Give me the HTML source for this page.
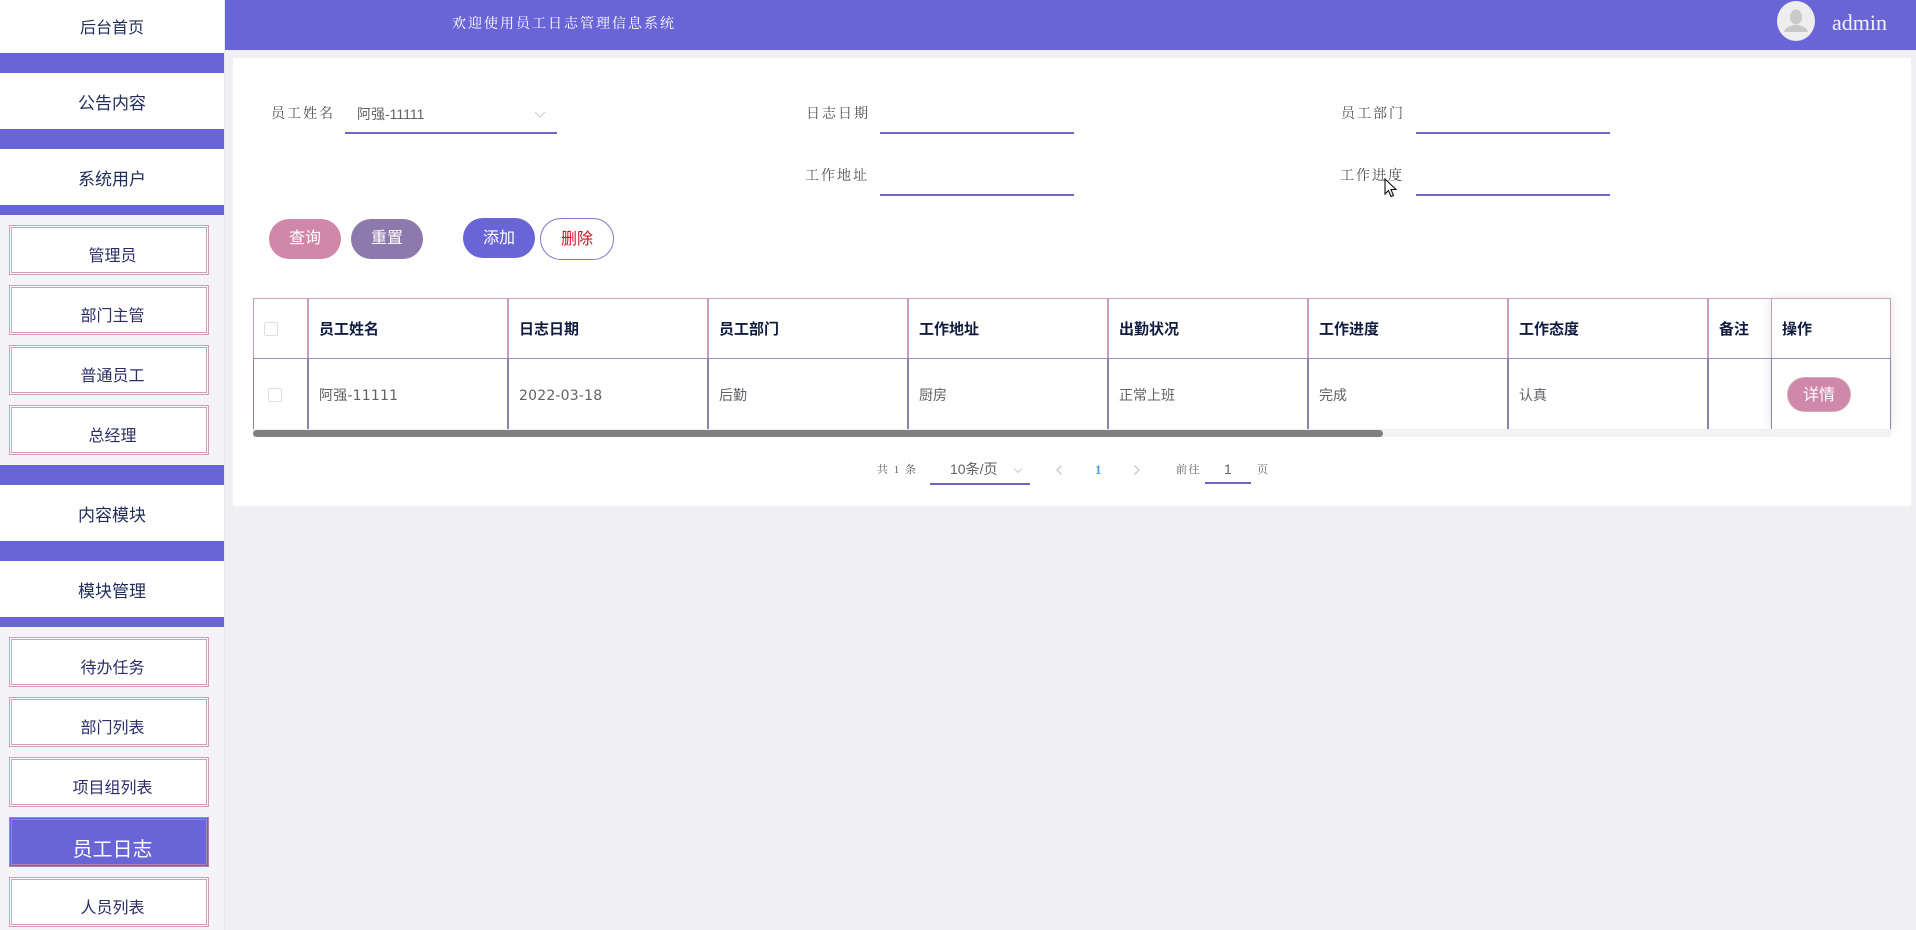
<!DOCTYPE html>
<html lang="zh"><head><meta charset="utf-8"><title>员工日志</title>
<style>
html,body{margin:0;padding:0;width:1916px;height:930px;overflow:hidden;background:#efeff4}
body{position:relative;font-family:"Liberation Sans","Noto Sans CJK SC",sans-serif}
.a{position:absolute}
.t{position:absolute;white-space:nowrap;line-height:20px}
.side{left:0;top:0;width:224px;height:930px;background:#f4f4f7;border-right:1px solid #e8e8ee}
.top{left:0;width:224px;background:#fff;text-align:center;color:#1f2c58;font-size:17px;box-sizing:border-box}
.bar{left:0;width:224px;background:#6a65d6}
.sub{left:9px;width:200px;height:50px;box-sizing:border-box;border:3px double #cf9db6;background:#fff;text-align:center;color:#2b2d66;font-size:16px;line-height:20px;padding-top:19px;padding-left:7px}
.sub.on{background:#6a65d6;color:#fff;font-size:20px;border-color:#b07fb0;padding-top:18px;line-height:24px;padding-left:7px}
.lab{font-family:"Liberation Serif","Noto Serif CJK SC",serif;font-weight:300;font-size:14px;letter-spacing:2px;color:#333}
.ul{height:2px;background:#6d66c4}
.btn{text-align:center;color:#fff;font-size:16px;box-sizing:border-box}
.th{font-size:15px;font-weight:bold;color:#101c40}
.td{font-size:14px;color:#606266;font-family:"DejaVu Sans","Noto Sans CJK SC",sans-serif}
.num{letter-spacing:.2px}
.vh{top:298px;height:60px;width:2px;background:#c99bb4}
.vd{top:358px;height:71px;width:2px;background:#8d82ab}
.cb{width:12px;height:12px;border:1px solid #dcdfe6;border-radius:2px;background:#fff}
.pg{font-family:"Liberation Serif","Noto Serif CJK SC",serif;font-size:11px;letter-spacing:1.5px;color:#606266}
</style></head><body>

<div class="a side"></div>
<div class="a top" style="top:0;height:53px;line-height:58px;font-size:16px">后台首页</div>
<div class="a bar" style="top:53px;height:20px"></div>
<div class="a top" style="top:73px;height:56px;line-height:62px">公告内容</div>
<div class="a bar" style="top:129px;height:20px"></div>
<div class="a top" style="top:149px;height:56px;line-height:62px">系统用户</div>
<div class="a bar" style="top:205px;height:10px"></div>
<div class="a sub" style="top:225px">管理员</div>
<div class="a sub" style="top:285px">部门主管</div>
<div class="a sub" style="top:345px">普通员工</div>
<div class="a sub" style="top:405px">总经理</div>
<div class="a bar" style="top:465px;height:20px"></div>
<div class="a top" style="top:485px;height:56px;line-height:62px">内容模块</div>
<div class="a bar" style="top:541px;height:20px"></div>
<div class="a top" style="top:561px;height:56px;line-height:62px">模块管理</div>
<div class="a bar" style="top:617px;height:10px"></div>
<div class="a sub" style="top:637px">待办任务</div>
<div class="a sub" style="top:697px">部门列表</div>
<div class="a sub" style="top:757px">项目组列表</div>
<div class="a sub on" style="top:817px">员工日志</div>
<div class="a sub" style="top:877px">人员列表</div>

<div class="a" style="left:225px;top:0;width:1691px;height:50px;background:#6a65d6"></div>
<div class="t" style="left:452px;top:15px;font-family:'Liberation Serif','Noto Serif CJK SC',serif;font-size:14px;letter-spacing:2px;color:#fff">欢迎使用员工日志管理信息系统</div>
<div class="a" style="left:1777px;top:1px;width:38px;height:40px;border-radius:50%;background:#eeeeee;overflow:hidden">
<svg width="38" height="40" viewBox="0 0 38 40"><ellipse cx="19" cy="16" rx="6" ry="7.5" fill="#c9c9c9"/><path d="M7 31c1-5 7-6 9-7h6c2 1 8 2 9 7z" fill="#c9c9c9"/></svg></div>
<div class="t" style="left:1832px;top:13px;font-family:'Liberation Serif',serif;font-size:22px;color:#f1f0fb">admin</div>

<div class="a" style="left:233px;top:58px;width:1678px;height:448px;background:#fff"></div>

<div class="t lab" style="left:271px;top:105px">员工姓名</div>
<div class="t" style="left:357px;top:104px;font-size:14px;color:#606266">阿强-11111</div>
<svg class="a" style="left:534px;top:110px" width="12" height="9" viewBox="0 0 12 9"><path d="M1 2l5 5 5-5" fill="none" stroke="#c9ccd3" stroke-width="1"/></svg>
<div class="a ul" style="left:345px;top:131.5px;width:212px"></div>
<div class="t lab" style="left:806px;top:105px">日志日期</div>
<div class="a ul" style="left:880px;top:131.5px;width:194px"></div>
<div class="t lab" style="left:1341px;top:105px">员工部门</div>
<div class="a ul" style="left:1416px;top:131.5px;width:194px"></div>
<div class="t lab" style="left:805px;top:167px">工作地址</div>
<div class="a ul" style="left:880px;top:194px;width:194px"></div>
<div class="t lab" style="left:1340px;top:167px">工作进度</div>
<div class="a ul" style="left:1416px;top:194px;width:194px"></div>

<div class="a btn" style="left:269px;top:219px;width:72px;height:40px;line-height:40px;border-radius:20px;background:#d088aa">查询</div>
<div class="a btn" style="left:351px;top:219px;width:72px;height:40px;line-height:40px;border-radius:20px;background:#8d79ab">重置</div>
<div class="a btn" style="left:463px;top:218px;width:72px;height:40px;line-height:42px;border-radius:20px;background:#6a65d6">添加</div>
<div class="a btn" style="left:540px;top:218px;width:74px;height:42px;line-height:42px;border-radius:21px;background:#fff;border:1px solid #8176c4;color:#d01028">删除</div>

<!-- table -->
<div class="a" style="left:1771px;top:298px;width:120px;height:131px;background:#fff;box-shadow:0 0 10px rgba(0,0,0,.12)"></div>
<div class="a" style="left:253px;top:429px;width:1638px;height:8px;background:#f2f2f4"></div>
<div class="a" style="left:253px;top:298px;width:1638px;height:1px;background:#cda3bb"></div>
<div class="a" style="left:253px;top:358px;width:1638px;height:1px;background:#9a90b8"></div>
<div class="a" style="left:253px;top:429px;width:1518px;height:1px;background:#ebeef5"></div>

<div class="a vh" style="left:253px;width:1px"></div>
<div class="a vd" style="left:253px;width:1px"></div>
<div class="a vh" style="left:307px"></div><div class="a vd" style="left:307px"></div>
<div class="a vh" style="left:507px"></div><div class="a vd" style="left:507px"></div>
<div class="a vh" style="left:707px"></div><div class="a vd" style="left:707px"></div>
<div class="a vh" style="left:907px"></div><div class="a vd" style="left:907px"></div>
<div class="a vh" style="left:1107px"></div><div class="a vd" style="left:1107px"></div>
<div class="a vh" style="left:1307px"></div><div class="a vd" style="left:1307px"></div>
<div class="a vh" style="left:1507px"></div><div class="a vd" style="left:1507px"></div>
<div class="a vh" style="left:1707px"></div><div class="a vd" style="left:1707px"></div>
<div class="a vh" style="left:1771px;width:1px"></div><div class="a vd" style="left:1771px;width:1px"></div>
<div class="a vh" style="left:1890px;width:1px"></div><div class="a vd" style="left:1890px;width:1px"></div>

<div class="a cb" style="left:264px;top:322px"></div>
<div class="a cb" style="left:268px;top:388px"></div>

<div class="t th" style="left:319px;top:320px">员工姓名</div>
<div class="t th" style="left:519px;top:320px">日志日期</div>
<div class="t th" style="left:719px;top:320px">员工部门</div>
<div class="t th" style="left:919px;top:320px">工作地址</div>
<div class="t th" style="left:1119px;top:320px">出勤状况</div>
<div class="t th" style="left:1319px;top:320px">工作进度</div>
<div class="t th" style="left:1519px;top:320px">工作态度</div>
<div class="t th" style="left:1719px;top:320px">备注</div>
<div class="t th" style="left:1782px;top:320px">操作</div>

<div class="t td num" style="left:319px;top:386px">阿强-11111</div>
<div class="t td num" style="left:519px;top:386px">2022-03-18</div>
<div class="t td" style="left:719px;top:386px">后勤</div>
<div class="t td" style="left:919px;top:386px">厨房</div>
<div class="t td" style="left:1119px;top:386px">正常上班</div>
<div class="t td" style="left:1319px;top:386px">完成</div>
<div class="t td" style="left:1519px;top:386px">认真</div>
<div class="a btn" style="left:1787px;top:377px;width:64px;height:35px;line-height:35px;border-radius:18px;background:#d088aa;border:1px solid #cdb0ae">详情</div>

<div class="a" style="left:253px;top:430px;width:1130px;height:7px;background:#808080;border-radius:4px"></div>

<!-- pagination -->
<div class="t pg" style="left:877px;top:460px">共 1 条</div>
<div class="t" style="left:950px;top:459px;font-size:14px;color:#606266">10条/页</div>
<svg class="a" style="left:1013px;top:467px" width="10" height="8" viewBox="0 0 10 8"><path d="M1 1.500l4 4 4-4" fill="none" stroke="#c9ccd3" stroke-width="1"/></svg>
<div class="a ul" style="left:930px;top:483px;width:100px"></div>
<svg class="a" style="left:1055px;top:464px" width="8" height="12" viewBox="0 0 8 12"><path d="M6.500 1.500L2 6l4.500 4.500" fill="none" stroke="#c4c7cf" stroke-width="1.300"/></svg>
<div class="t" style="left:1095px;top:460px;font-size:13px;font-weight:bold;font-family:'Liberation Serif',serif;color:#4a9fe8">1</div>
<svg class="a" style="left:1133px;top:464px" width="8" height="12" viewBox="0 0 8 12"><path d="M1.500 1.500L6 6l-4.500 4.500" fill="none" stroke="#c4c7cf" stroke-width="1.300"/></svg>
<div class="t pg" style="left:1176px;top:460px">前往</div>
<div class="t" style="left:1224px;top:459px;font-size:14px;color:#606266">1</div>
<div class="a ul" style="left:1205px;top:482px;width:46px"></div>
<div class="t pg" style="left:1257px;top:460px">页</div>

<!-- cursor -->
<svg class="a" style="left:1384px;top:178px" width="15" height="22" viewBox="0 0 15 22"><path d="M1 1v15l3.500-3.500 2.500 6 2.500-1-2.500-6h5z" fill="#fff" stroke="#111" stroke-width="1.100"/></svg>

</body></html>
